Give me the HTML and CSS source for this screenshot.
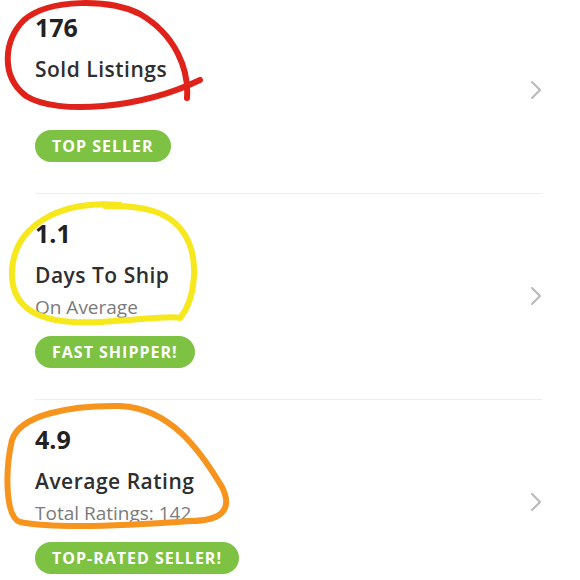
FILE: index.html
```html
<!DOCTYPE html>
<html lang="en">
<head>
  <meta charset="UTF-8">
  <meta name="viewport" content="width=device-width, initial-scale=1.0">
  <title>Seller Stats</title>
  <link rel="stylesheet" href="styles.css">
</head>
<body>
  <!-- Stats list -->
  <div class="stats">
    <div class="stat-row first">
      <div class="stat-info">
        <div class="stat-number">176</div>
        <div class="stat-title">Sold Listings</div>
        <div class="stat-sub">&nbsp;</div>
        <span class="badge">TOP SELLER</span>
      </div>
      <svg class="chevron" width="12" height="20" viewBox="0 0 12 20"><polyline points="2,2 10,10 2,18"/></svg>
    </div>

    <div class="stat-row">
      <div class="stat-info">
        <div class="stat-number">1.1</div>
        <div class="stat-title">Days To Ship</div>
        <div class="stat-sub">On Average</div>
        <span class="badge">FAST SHIPPER!</span>
      </div>
      <svg class="chevron" width="12" height="20" viewBox="0 0 12 20"><polyline points="2,2 10,10 2,18"/></svg>
    </div>

    <div class="stat-row last">
      <div class="stat-info">
        <div class="stat-number">4.9</div>
        <div class="stat-title">Average Rating</div>
        <div class="stat-sub">Total Ratings: 142</div>
        <span class="badge">TOP-RATED SELLER!</span>
      </div>
      <svg class="chevron" width="12" height="20" viewBox="0 0 12 20"><polyline points="2,2 10,10 2,18"/></svg>
    </div>
  </div>

  <!-- Hand-drawn marks on top of the screenshot -->
  <svg class="marks" width="580" height="580" viewBox="0 0 580 580">
    <path class="mark-red" d="M187 98 C189 70 176 35 140 14 C110 -1 50 -2 24 20 C4 40 0 76 26 96 C58 116 142 108 200 80"/>
    <path class="mark-yellow" d="M120 205 C60 200 15 225 12 270 C10 310 40 325 100 322 C140 320 170 315 180 318 C195 300 200 260 185 235 C170 210 140 205 105 206"/>
    <path class="mark-orange" d="M190 521 C150 524 60 530 20 522 C5 517 5 470 12 440 C20 415 70 405 120 406 C170 408 200 450 222 487 C232 507 225 521 190 521"/>
  </svg>
</body>
</html>
```

FILE: styles.css
```css
/* Global Styles */
body {
  font-family: "Open Sans", sans-serif;
  margin: 0;
  padding: 0;
  background-color: #ffffff;
  color: #2b2b2b;
  position: relative;
  width: 580px;
  height: 580px;
  overflow: hidden;
}

/* Stats list */
.stats {
  padding: 0 38px 0 35px;
}

.stat-row {
  display: flex;
  align-items: center;
  justify-content: space-between;
  padding: 22px 0 31px;
  border-bottom: 1px solid #eeeeee;
}

.stat-row.first {
  padding-top: 10px;
}

.stat-row.last {
  border-bottom: none;
}

.stat-info {
  display: flex;
  flex-direction: column;
  align-items: flex-start;
}

.stat-number {
  font-size: 25px;
  line-height: 34px;
  font-weight: 700;
  color: #222222;
}

.stat-title {
  margin-top: 11px;
  font-size: 21px;
  line-height: 28px;
  font-weight: 600;
  letter-spacing: 0.5px;
  color: #2e2e2e;
}

.stat-sub {
  margin-top: 6px;
  font-size: 19px;
  line-height: 24px;
  color: #7b7b7b;
}

.badge {
  margin-top: 17px;
  height: 32px;
  line-height: 32px;
  padding: 0 17px;
  border-radius: 16px;
  background-color: #7dc243;
  color: #ffffff;
  font-size: 16px;
  font-weight: 700;
  letter-spacing: 1px;
}

.chevron {
  margin-top: 8px;
}

.chevron polyline {
  fill: none;
  stroke: #b8b8b8;
  stroke-width: 2;
  stroke-linecap: round;
  stroke-linejoin: round;
}

/* Hand-drawn marks */
.marks {
  position: absolute;
  top: 0;
  left: 0;
  pointer-events: none;
}

.marks path {
  fill: none;
  stroke-width: 6;
  stroke-linecap: round;
  stroke-linejoin: round;
}

.mark-red {
  stroke: #e0231a;
}

.mark-yellow {
  stroke: #f6e81c;
}

.mark-orange {
  stroke: #f7941e;
}
```
